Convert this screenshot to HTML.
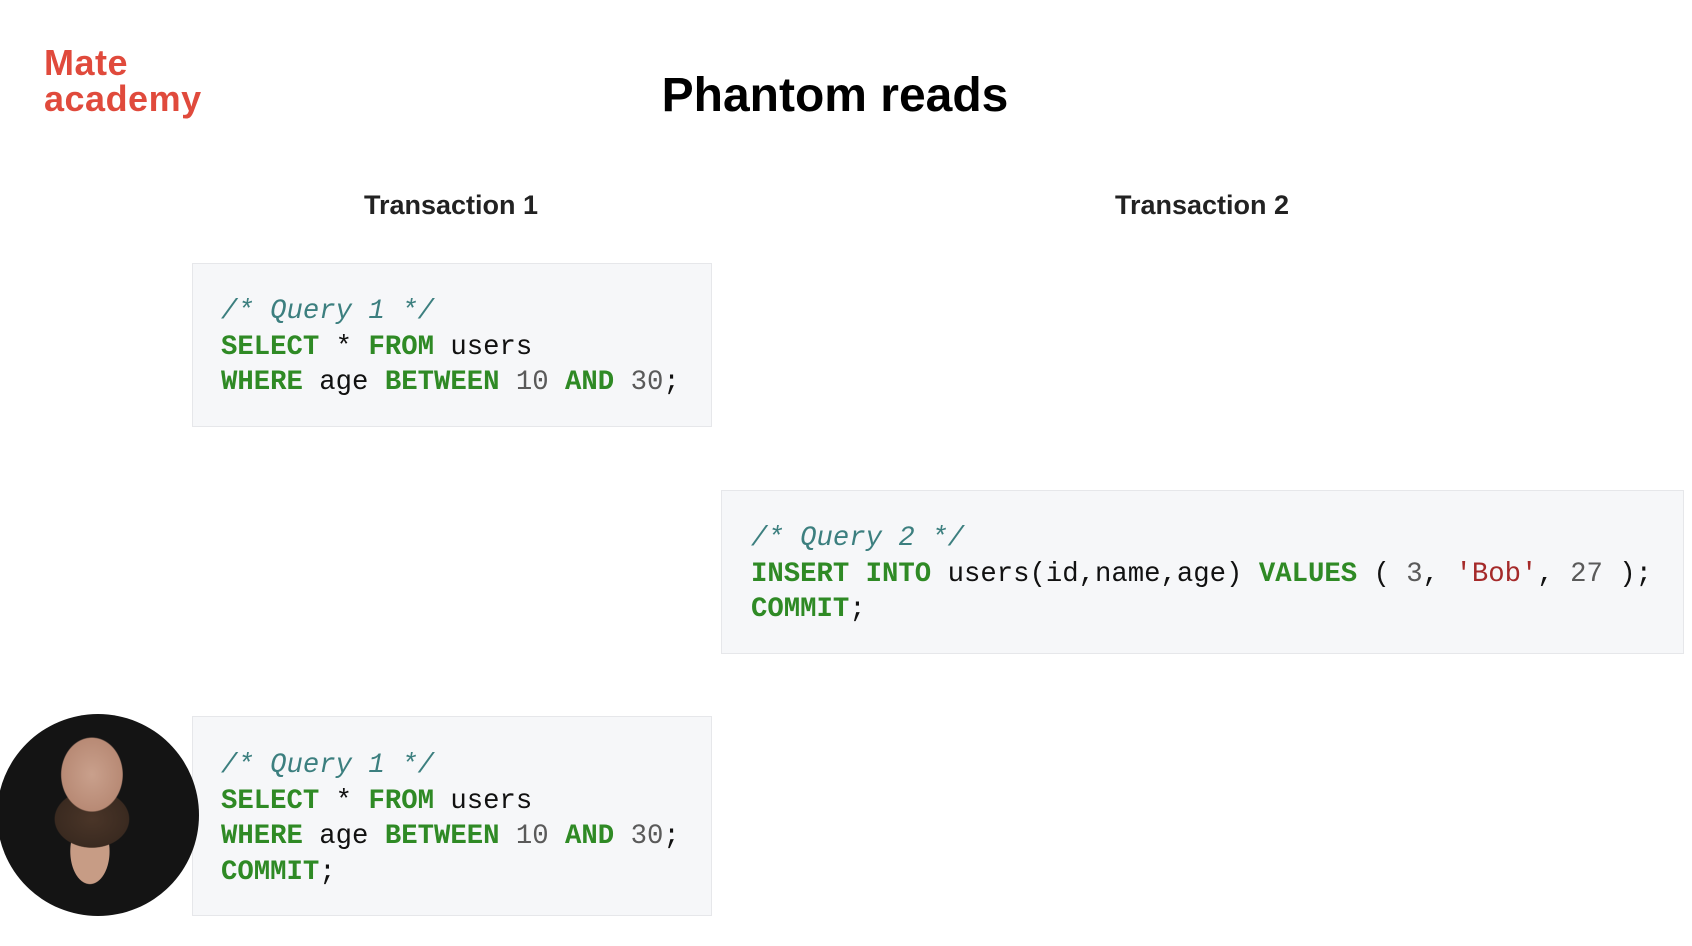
<!DOCTYPE html>
<html><head><meta charset="utf-8"><style>
body{margin:0;width:1692px;height:946px;background:#fff;position:relative;overflow:hidden;font-family:"Liberation Sans",Arial,sans-serif}
.abs{position:absolute}
.logo{left:44px;color:#e04a3c;font-size:36px;font-weight:bold;line-height:36px;letter-spacing:0.5px}
.title{left:0;width:1670px;text-align:center;top:68px;font-size:48px;font-weight:bold;color:#000}
.th{font-size:27px;font-weight:bold;color:#222;top:190px;width:400px;text-align:center}
.box{background:#f6f7f9;border:1px solid #e6e7ea;box-sizing:border-box}
pre{position:absolute;margin:0;font-family:"Liberation Mono","Courier New",monospace;font-size:27.3px;line-height:35.6px;color:#111}
.c{color:#3c7f7f;font-style:italic}
.k{color:#2f8a25;font-weight:bold}
.n{color:#5a5a5a}
.s{color:#a52a2a}
.av{left:-3px;top:714px;width:202px;height:202px;border-radius:50%;background:radial-gradient(ellipse 25% 30% at 47% 30%,#c9a08c 0,#b88a75 60%,transparent 62%),radial-gradient(ellipse 26% 20% at 47% 52%,#4a3528 0,#3a2a20 70%,transparent 72%),radial-gradient(ellipse 12% 20% at 46% 68%,#c79c85 0,#c79c85 80%,transparent 82%),#141414}
</style></head><body>
<div class="abs logo" style="top:45px">Mate<br>academy</div>
<div class="abs title">Phantom reads</div>
<div class="abs th" style="left:251px">Transaction 1</div>
<div class="abs th" style="left:1002px">Transaction 2</div>

<div class="abs box" style="left:192px;top:263px;width:520px;height:164px"></div>
<pre style="left:221px;top:294px"><span class="c">/* Query 1 */</span>
<span class="k">SELECT</span> * <span class="k">FROM</span> users
<span class="k">WHERE</span> age <span class="k">BETWEEN</span> <span class="n">10</span> <span class="k">AND</span> <span class="n">30</span>;</pre>

<div class="abs box" style="left:721px;top:490px;width:963px;height:164px"></div>
<pre style="left:751px;top:521px"><span class="c">/* Query 2 */</span>
<span class="k">INSERT INTO</span> users(id,name,age) <span class="k">VALUES</span> ( <span class="n">3</span>, <span class="s">'Bob'</span>, <span class="n">27</span> );
<span class="k">COMMIT</span>;</pre>

<div class="abs box" style="left:192px;top:716px;width:520px;height:200px"></div>
<pre style="left:221px;top:748px"><span class="c">/* Query 1 */</span>
<span class="k">SELECT</span> * <span class="k">FROM</span> users
<span class="k">WHERE</span> age <span class="k">BETWEEN</span> <span class="n">10</span> <span class="k">AND</span> <span class="n">30</span>;
<span class="k">COMMIT</span>;</pre>

<div class="abs av"></div>
</body></html>
